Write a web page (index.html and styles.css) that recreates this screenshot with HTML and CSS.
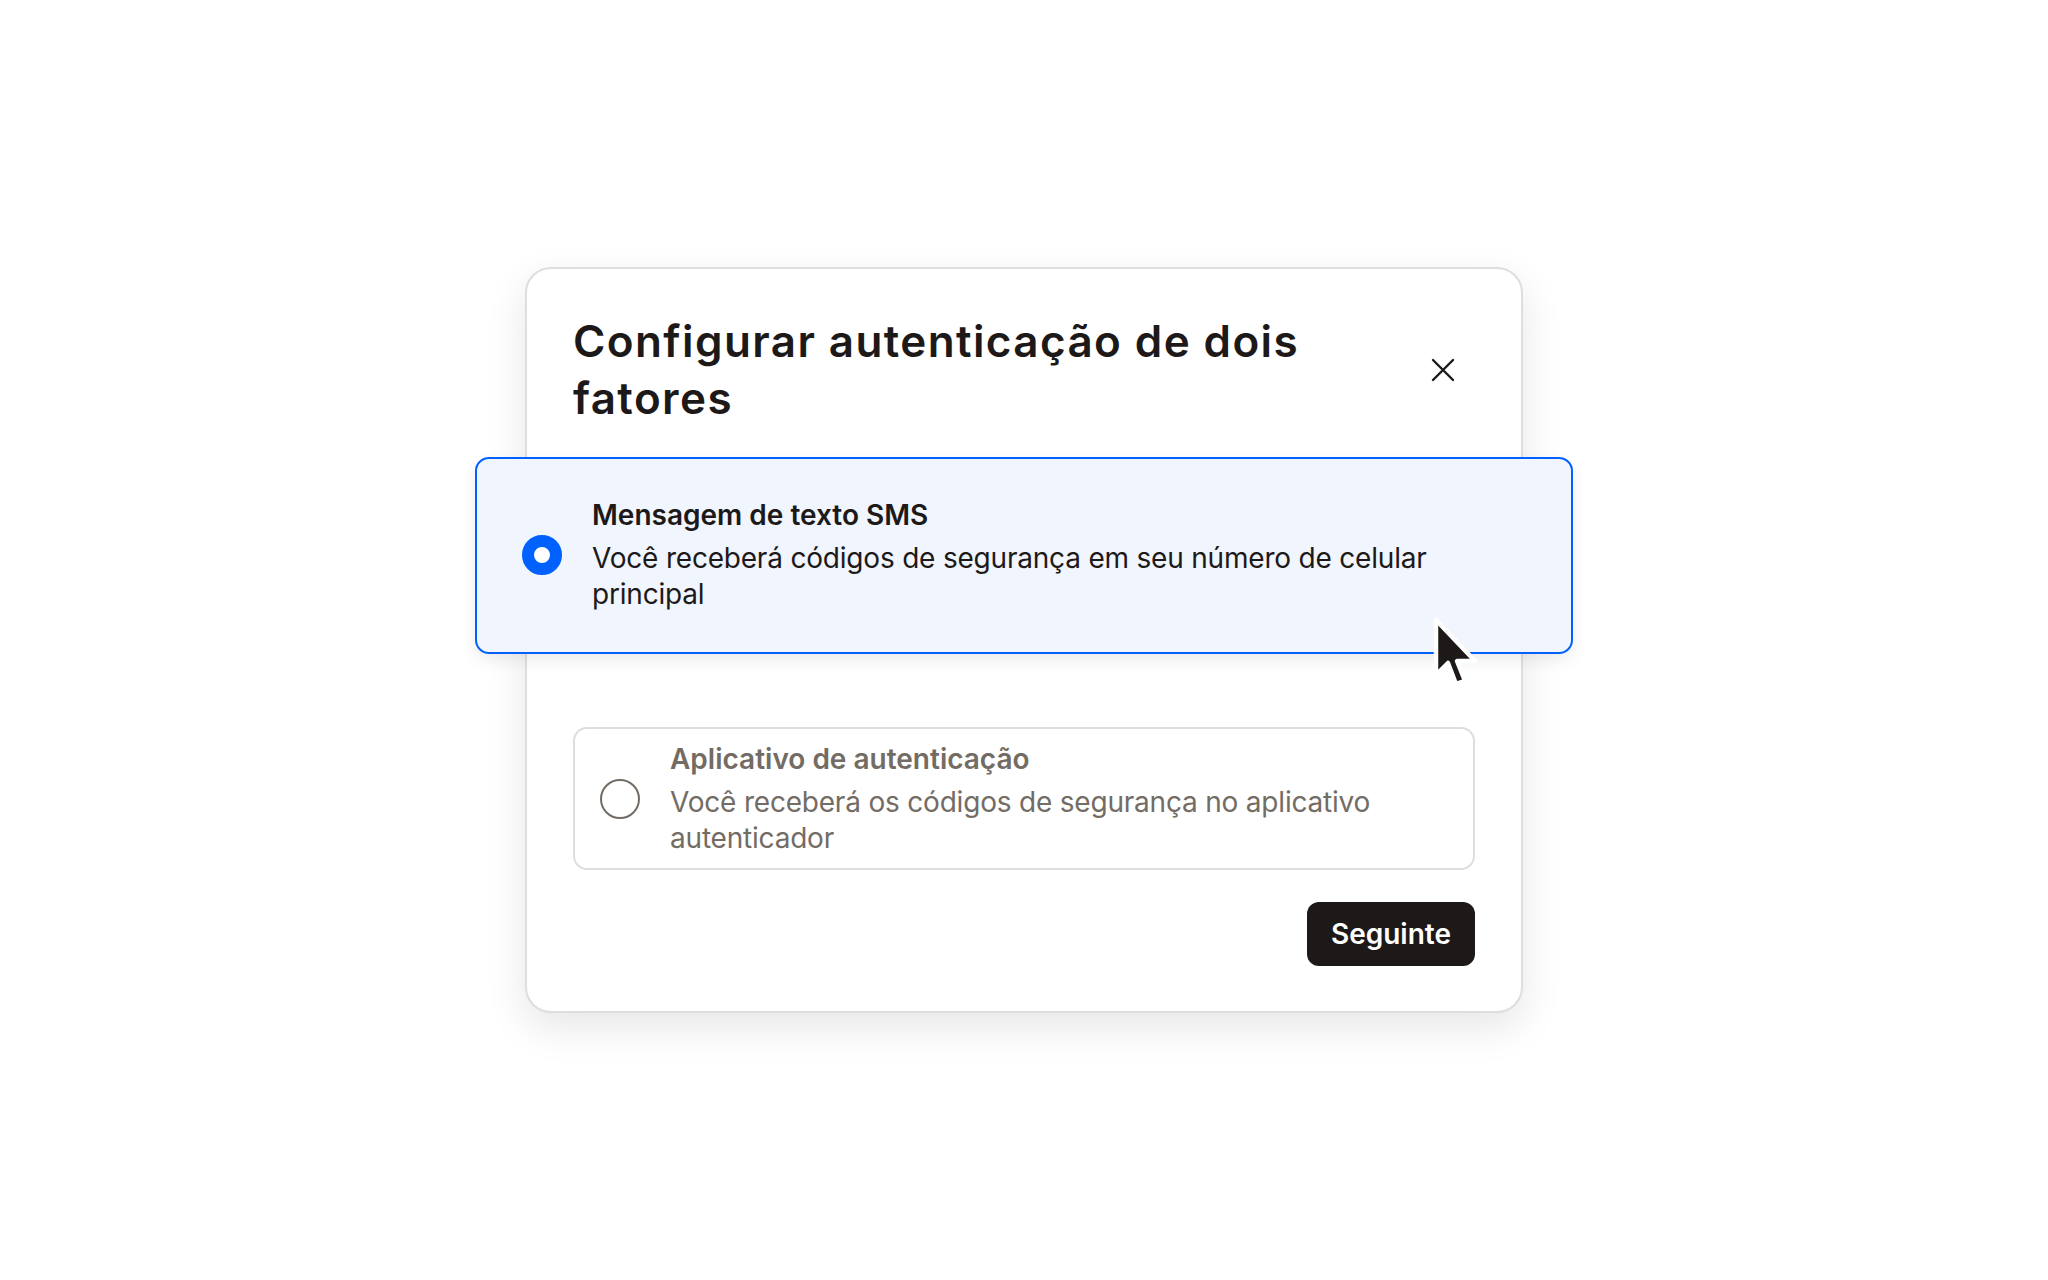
FILE: index.html
```html
<!DOCTYPE html>
<html lang="pt-BR">

<head>
    <meta charset="UTF-8">
    <meta name="viewport" content="width=device-width, initial-scale=1.0">
    <title>Autenticação de dois fatores</title>
    <link rel="stylesheet" href="styles.css">
</head>

<body>
    <div class="stage">
        <div class="dialog">
            <div class="dialog-header">
                <h1 class="dialog-title">Configurar autenticação de dois fatores</h1>
                <button class="close-btn" aria-label="Fechar">
                    <svg width="24" height="24" viewBox="0 0 24 24">
                        <path d="M2 2 L22 22 M22 2 L2 22" stroke="#1e1919" stroke-width="2.4" stroke-linecap="round" fill="none"/>
                    </svg>
                </button>
            </div>

            <!-- selected option, drawn larger than the dialog -->
            <div class="option option-selected">
                <span class="radio radio-on"></span>
                <div class="option-text">
                    <div class="option-name">Mensagem de texto SMS</div>
                    <div class="option-desc">Você receberá códigos de segurança em seu número de celular principal</div>
                </div>
                <svg class="cursor" width="52" height="76" viewBox="0 0 52 76">
                    <path d="M5 5 L5 60 L17 48 L25 69 L34 66 L26 46 L44 46 Z" fill="#1e1919" stroke="#fff" stroke-width="4.5" stroke-linejoin="round"/>
                </svg>
            </div>

            <div class="option option-plain">
                <span class="radio"></span>
                <div class="option-text">
                    <div class="option-name">Aplicativo de autenticação</div>
                    <div class="option-desc">Você receberá os códigos de segurança no aplicativo autenticador</div>
                </div>
            </div>

            <div class="dialog-footer">
                <button class="next-btn">Seguinte</button>
            </div>
        </div>
    </div>
</body>

</html>
```

FILE: styles.css
```css
body {
    background-color: white;
    color: #1e1919;
    font-family: Inter, "Noto Sans", sans-serif;
    margin: 0;
    padding: 0;
}

.stage {
    height: 100vh;
    display: flex;
    align-items: center;
    justify-content: center;
}

.dialog {
    width: 998px;
    box-sizing: border-box;
    background-color: white;
    border: 2px solid #dedede;
    border-radius: 26px;
    padding: 44px 46px 45px 46px;
    box-shadow: 0 14px 40px rgba(0, 0, 0, 0.10);
}

.dialog-header {
    display: flex;
    align-items: center;
    justify-content: space-between;
}

.dialog-title {
    margin: 0;
    font-size: 44px;
    line-height: 57px;
    font-weight: 600;
    letter-spacing: 1.4px;
    max-width: 820px;
}

.close-btn {
    width: 64px;
    height: 64px;
    border: none;
    background: none;
    padding: 0;
    display: flex;
    align-items: center;
    justify-content: center;
    flex-shrink: 0;
}

.option {
    display: flex;
    align-items: center;
    gap: 30px;
    box-sizing: border-box;
}

.option-selected {
    position: relative;
    margin: 30px -98px 0 -98px;
    padding: 38px 97px 40px 45px;
    border: 2px solid #0061fe;
    border-radius: 14px;
    background-color: #f0f5fe;
    box-shadow: 0 6px 16px rgba(0, 0, 0, 0.08);
}

.option-plain {
    margin-top: 73px;
    padding: 12px 25px;
    border: 2px solid #dedede;
    border-radius: 14px;
    color: #736c64;
}

.radio {
    width: 40px;
    height: 40px;
    box-sizing: border-box;
    border-radius: 50%;
    border: 2px solid #736c64;
    flex-shrink: 0;
}

.radio-on {
    border: 12px solid #0061fe;
    background-color: white;
}

.option-text {
    display: flex;
    flex-direction: column;
    gap: 7px;
}

.option-name {
    font-size: 28px;
    line-height: 36px;
    font-weight: 600;
}

.option-desc {
    font-size: 28px;
    line-height: 36px;
    letter-spacing: -0.2px;
}

.cursor {
    position: absolute;
    left: 954px;
    top: 156px;
}

.dialog-footer {
    display: flex;
    justify-content: flex-end;
    margin-top: 32px;
}

.next-btn {
    height: 64px;
    padding: 0 24px;
    border: none;
    border-radius: 12px;
    background-color: #1e1919;
    color: white;
    font-family: Inter, sans-serif;
    font-size: 28px;
    font-weight: 600;
}
```
